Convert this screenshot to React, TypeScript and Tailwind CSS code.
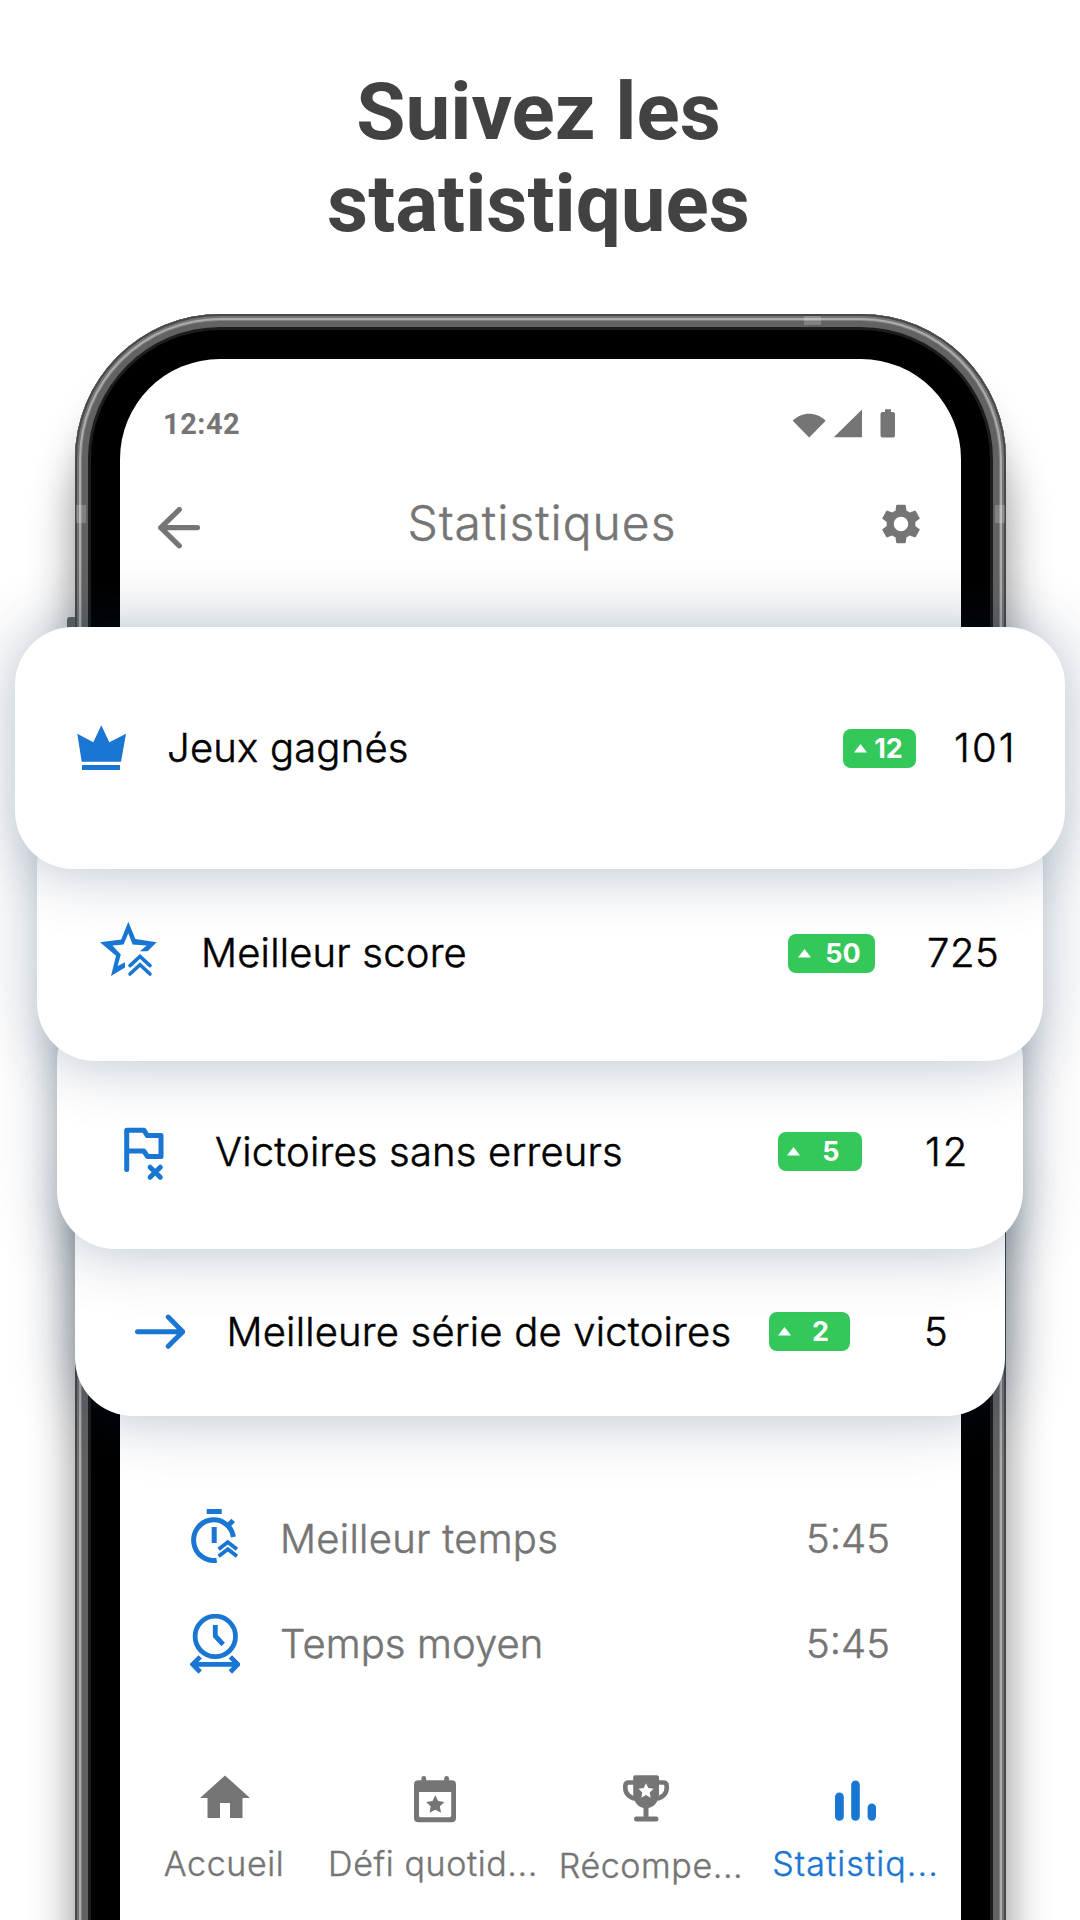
import React from "react";
import { MdHome, MdSettings } from "react-icons/md";

const CrownIcon = () => (
  <svg width="50" height="46" viewBox="0 0 50 46" fill="currentColor">
    <path d="M.3 8.7 16.3 17.3 24.3.3 32.3 17.3 49 8.7 44 36.7H4.7Z" />
    <path d="M5 40.1H43V45H5Z" />
  </svg>
);

const StarIcon = () => (
  <svg width="58" height="56" viewBox="0 0 58 56" fill="none">
    <path
      fill="currentColor"
      d="M28.3.7 35.4 18 56.7 21.3 47.6 30.3H40L46.6 24.6 32.6 23.4 28.3 12.2 23.6 23.4 12.5 24.6 20.8 33.6 17.6 45 25 41.2V46.6L11 55 16 34.8 0 21.3 21.2 18.6Z"
    />
    <path
      stroke="currentColor"
      strokeWidth="3.6"
      strokeLinecap="round"
      d="M30 44.6 40 35.4 50 44.6M30 53 40 43.8 50 53"
    />
  </svg>
);

const FlagIcon = () => (
  <svg width="42" height="54" viewBox="0 0 42 54" fill="none" stroke="currentColor" strokeWidth="5" strokeLinecap="round" strokeLinejoin="round">
    <path d="M2.7 42.5V3.3H20L23.3 8.6H37V29.6H23.6L19.8 24H2.7" />
    <path d="M26.1 40.2 36.3 50.2M36.3 40.2 26.1 50.2" />
  </svg>
);

const StreakIcon = () => (
  <svg width="50" height="36" viewBox="0 0 50 36" fill="none" stroke="currentColor" strokeWidth="4.9" strokeLinecap="round" strokeLinejoin="round">
    <path d="M2.4 17.7H47.6M33.2 3.1 47.8 17.7 33.2 32.3" />
  </svg>
);

const BackIcon = () => (
  <svg width="42" height="42" viewBox="0 0 42 42" fill="none" stroke="currentColor" strokeWidth="5.2" strokeLinecap="round" strokeLinejoin="round">
    <path d="M39.5 20.7H2.8M21.3 2.6 2.8 20.7 21.3 38.8" />
  </svg>
);

const StopwatchIcon = () => (
  <svg width="50" height="56" viewBox="0 0 50 56" fill="none" stroke="currentColor" strokeWidth="5">
    <path d="M16.7 2.5H31.7M24.2 18V34M38.3 16.3 43.2 11.4" />
    <path d="M43.4 28A20 20.3 0 1 0 26.7 51.2" />
    <path strokeWidth="3.8" d="M28.6 40.2 37.8 33.2 47 40.2M28.6 47.2 37.8 40.2 47 47.2" />
  </svg>
);

const AverageIcon = () => (
  <svg width="50" height="60" viewBox="0 0 50 60" fill="none" stroke="currentColor" strokeWidth="4.8">
    <circle cx="25.3" cy="22.4" r="20.2" />
    <path d="M25.3 11V22L33.2 30.5M4 50.4H46.6M10.2 42.8 2.8 50.4 10.2 58M40.4 42.8 47.8 50.4 40.4 58" />
  </svg>
);

const SignalIcons = () => (
  <svg width="104" height="30" viewBox="0 0 104 30" fill="currentColor">
    <path d="M.7 11.7C9.8 2.4 24.4 2.4 33.7 11.7L17.2 28.5Z" />
    <path d="M42 28.3V28L70 .6V28.3Z" />
    <path d="M93 3V.3H99V3H101Q103 3 103 5V26.5Q103 28.5 101 28.5H90.5Q88.5 28.5 88.5 26.5V5Q88.5 3 90.5 3Z" />
  </svg>
);

const CalendarIcon = () => (
  <svg width="42" height="47" viewBox="0 0 42 47" fill="currentColor">
    <path
      fillRule="evenodd"
      d="M7.4 4.3V2.5A2.4 2.4 0 0 1 12.2 2.5V4.3H30.2V2.5A2.4 2.4 0 0 1 35 2.5V4.3H37.5Q42 4.3 42 8.5V42Q42 46.3 37.5 46.3H4.5Q0 46.3 0 42V8.5Q0 4.3 4.5 4.3ZM5 16V39.8Q5 41.2 6.5 41.2H35.7Q37.2 41.2 37.2 39.8V16Z"
    />
    <path d="M21.3 19.2 24.1 25 30.5 25.9 25.9 30.3 27 36.7 21.3 33.7 15.6 36.7 16.7 30.3 12.1 25.9 18.5 25Z" />
  </svg>
);

const TrophyIcon = () => (
  <svg width="46" height="47" viewBox="0 0 46 47" fill="currentColor">
    <path d="M12 .2H34Q36 .2 36 2.3V18C36 26 32 31.5 25.5 33V41.5H33.5A2.5 2.5 0 0 1 33.5 46.4H13A2.5 2.5 0 0 1 13 41.5H20.5V33C14 31.5 10.2 26 10.2 18V2.3Q10.2 .2 12 .2Z" />
    <path fill="none" stroke="currentColor" strokeWidth="4.6" d="M11.5 7.5H5.8Q2.3 7.5 2.3 11V13C2.3 18.5 6.5 23 12.5 23.5M34.5 7.5H40.2Q43.7 7.5 43.7 11V13C43.7 18.5 39.5 23 33.5 23.5" />
    <path fill="#fff" d="M23 8.3 25.3 13.1 30.5 13.8 26.7 17.4 27.7 22.7 23 20.1 18.3 22.7 19.3 17.4 15.5 13.8 20.7 13.1Z" />
  </svg>
);

const BarsIcon = () => (
  <svg width="41" height="41" viewBox="0 0 41 41" fill="currentColor">
    <rect x="0" y="12.5" width="8.8" height="28.3" rx="4.4" />
    <rect x="16.2" y=".5" width="8.6" height="40.3" rx="4.3" />
    <rect x="32.6" y="23.5" width="8.4" height="17.3" rx="4.2" />
  </svg>
);

type StatCardProps = {
  icon: React.ReactNode;
  label: string;
  delta: string;
  value: string;
  card: string;
  labelGap: string;
  badge: string;
  valueBox: string;
};

const StatCard = ({ icon, label, delta, value, card, labelGap, badge, valueBox }: StatCardProps) => (
  <div className={`relative flex items-center rounded-[58px] bg-white shadow-[0_0_64px_rgba(8,40,78,0.3)] ${card}`}>
    <span className="shrink-0 text-[#1976d2]">{icon}</span>
    <span className={`whitespace-nowrap text-[40px] leading-none font-light tracking-[0.2px] text-black [-webkit-text-stroke:0.5px_currentColor] ${labelGap}`}>{label}</span>
    <span className={`ml-auto flex h-[39px] shrink-0 items-center rounded-lg bg-[#34c759] text-[27px] leading-none font-bold text-white ${badge}`}>
      <svg width="13" height="9" viewBox="0 0 13 9" fill="currentColor" className="shrink-0">
        <path d="M0 8.5 6.5 0 13 8.5Z" />
      </svg>
      <span className="flex-1 text-center">{delta}</span>
    </span>
    <span className={`shrink-0 text-[40px] leading-none font-light text-black [-webkit-text-stroke:0.5px_currentColor] ${valueBox}`}>{value}</span>
  </div>
);

export default function App() {
  return (
    <div className="h-[1920px] w-[1080px] overflow-hidden bg-white font-['Inter',sans-serif] text-[#757575]">
      <h1 className="mt-[66px] mr-[3px] text-center font-['Roboto',sans-serif] text-[80px] leading-[92px] font-bold text-[#424242]">
        Suivez les
        <br />
        statistiques
      </h1>

      <div className="relative mt-[64px] ml-[75px] h-[1800px] w-[931px] rounded-[145px] bg-black p-[45px] shadow-[0_60px_44px_rgba(0,0,0,0.46),inset_0_0_0_2px_#484848,inset_0_0_0_4px_#747474,inset_0_0_0_6px_#acacac,inset_0_0_0_7px_#808080,inset_0_0_0_13px_#626262,inset_0_0_0_16px_#1d1d1d]">
        <span className="absolute top-[2px] left-[729px] h-[9px] w-[17px] bg-white/20" />
        <span className="absolute top-[191px] left-[1px] h-[18px] w-[10px] bg-white/20" />
        <span className="absolute top-[191px] right-[1px] h-[18px] w-[10px] bg-white/20" />
        <span className="absolute top-[303px] -left-[8px] h-[40px] w-[8px] rounded-tl-[3px] bg-[#606266]" />

        <div className="h-[1755px] w-[841px] rounded-t-[100px] bg-white">
          <div className="flex h-[128px] items-center justify-between pt-[2px] pr-[65px] pl-[43px]">
            <span className="font-['Roboto',sans-serif] text-[29px] leading-none font-bold tracking-[0.5px]">12:42</span>
            <SignalIcons />
          </div>

          <div className="-mt-[2px] flex h-[142px] items-start justify-between pt-[2px] pr-[36px] pl-[38px]">
            <span className="mt-[20px]"><BackIcon /></span>
            <span className="mt-[12px] ml-[7px] text-[48px] leading-none font-light tracking-[1px] [-webkit-text-stroke:0.5px_currentColor]">Statistiques</span>
            <MdSettings size={48} className="mt-[13px]" />
          </div>

          <div className="relative -ml-[105px] flex w-[1050px] flex-col items-center">
            <StatCard
              icon={<CrownIcon />}
              label="Jeux gagnés"
              delta="12"
              value="101"
              card="z-40 h-[242px] w-[1050px] pl-[62px]"
              labelGap="ml-[40px]"
              badge="w-[73px] pl-[11px] pr-[6px]"
              valueBox="w-[149px] pl-[38px] tracking-[2.2px]"
            />
            <StatCard
              icon={<span className="relative -top-[4px]"><StarIcon /></span>}
              label="Meilleur score"
              delta="50"
              value="725"
              card="z-30 -mt-[60px] h-[252px] w-[1006px] pt-[36px] pl-[63px]"
              labelGap="ml-[43px]"
              badge="w-[87px] pl-[10px]"
              valueBox="w-[168px] pl-[52px] tracking-[0.5px]"
            />
            <StatCard
              icon={<span className="relative top-[2px]"><FlagIcon /></span>}
              label="Victoires sans erreurs"
              delta="5"
              value="12"
              card="z-20 -mt-[58px] h-[246px] w-[966px] pt-[51px] pl-[67px]"
              labelGap="ml-[49px]"
              badge="w-[84px] pl-[9px]"
              valueBox="w-[161px] pl-[63px] tracking-[2px]"
            />
            <StatCard
              icon={<StreakIcon />}
              label="Meilleure série de victoires"
              delta="2"
              value="5"
              card="z-10 -mt-[76px] h-[243px] w-[930px] pt-[74px] pl-[60px]"
              labelGap="ml-[41.5px]"
              badge="w-[81px] pl-[9px]"
              valueBox="w-[155px] pl-[74px]"
            />
          </div>

          <div className="mt-[70px] flex h-[105px] items-center pr-[71px] pl-[70px] text-[40px] leading-none font-light [-webkit-text-stroke:0.5px_currentColor]">
            <span className="-mt-[4px] text-[#1976d2]"><StopwatchIcon /></span>
            <span className="ml-[40px] whitespace-nowrap tracking-[0.3px]">Meilleur temps</span>
            <span className="ml-auto">5:45</span>
          </div>
          <div className="flex h-[105px] items-center pr-[71px] pl-[70px] text-[40px] leading-none font-light [-webkit-text-stroke:0.5px_currentColor]">
            <span className="text-[#1976d2]"><AverageIcon /></span>
            <span className="ml-[40px] whitespace-nowrap tracking-[0.1px]">Temps moyen</span>
            <span className="ml-auto">5:45</span>
          </div>

          <nav className="mt-[80px] flex text-[34px] leading-[41px] font-light tracking-[0.6px] [-webkit-text-stroke:0.4px_currentColor]">
            <div className="flex w-[208px] flex-col items-center">
              <span className="flex h-[58px] items-start pl-[2px]"><MdHome size={60} strokeWidth={0} className="-mt-[8px]" /></span>
              <span className="mt-[9px] whitespace-nowrap">Accueil</span>
            </div>
            <div className="flex w-[210px] flex-col items-center">
              <span className="flex h-[58px] items-start pl-[4px]"><CalendarIcon /></span>
              <span className="mt-[9px] whitespace-nowrap">Défi quotid...</span>
            </div>
            <div className="flex w-[226px] flex-col items-center">
              <span className="-mt-[1px] flex h-[59px] items-start pr-[10px]"><TrophyIcon /></span>
              <span className="mt-[11px] whitespace-nowrap">Récompe...</span>
            </div>
            <div className="flex w-[183px] flex-col items-center tracking-[1.1px] text-[#1976d2]">
              <span className="flex h-[58px] items-start pt-[4px]"><BarsIcon /></span>
              <span className="mt-[9px] whitespace-nowrap">Statistiq...</span>
            </div>
          </nav>
        </div>
      </div>
    </div>
  );
}
